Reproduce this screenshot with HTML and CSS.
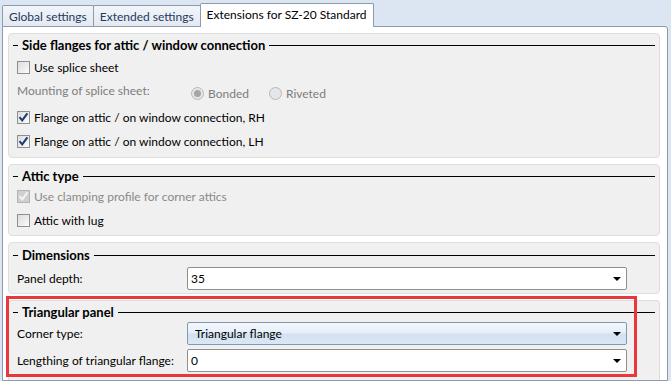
FILE: index.html
```html
<!DOCTYPE html>
<html lang="en">
<head>
    <meta charset="UTF-8">
    <title>Extensions for SZ-20 Standard</title>
    <link rel="stylesheet" href="styles.css">
</head>
<body>
    <div class="tabs">
        <div class="tab">Global settings</div>
        <div class="tab">Extended settings</div>
        <div class="tab active">Extensions for SZ-20 Standard</div>
    </div>

    <div class="panel">
        <section class="group group-flanges">
            <div class="group-title"><span>Side flanges for attic / window connection</span></div>
            <div class="row">
                <span class="check"></span>
                <span>Use splice sheet</span>
            </div>
            <div class="row row-mounting">
                <span class="mount-label">Mounting of splice sheet:</span>
                <span class="radio checked"></span>
                <span class="radio-text">Bonded</span>
                <span class="radio"></span>
                <span class="radio-text">Riveted</span>
            </div>
            <div class="row">
                <span class="check">
                    <svg viewBox="0 0 13 13" width="13" height="13"><path d="M2.5 6.2 L5.2 9.4 L10.4 2.3" fill="none" stroke="#1d3a7a" stroke-width="2"/></svg>
                </span>
                <span>Flange on attic / on window connection, RH</span>
            </div>
            <div class="row">
                <span class="check">
                    <svg viewBox="0 0 13 13" width="13" height="13"><path d="M2.5 6.2 L5.2 9.4 L10.4 2.3" fill="none" stroke="#1d3a7a" stroke-width="2"/></svg>
                </span>
                <span>Flange on attic / on window connection, LH</span>
            </div>
        </section>

        <section class="group group-attic">
            <div class="group-title"><span>Attic type</span></div>
            <div class="row disabled">
                <span class="check">
                    <svg viewBox="0 0 13 13" width="13" height="13"><path d="M2.5 6.2 L5.2 9.4 L10.4 2.3" fill="none" stroke="#f4f4f4" stroke-width="2"/></svg>
                </span>
                <span>Use clamping profile for corner attics</span>
            </div>
            <div class="row">
                <span class="check"></span>
                <span>Attic with lug</span>
            </div>
        </section>

        <section class="group group-dims">
            <div class="group-title"><span>Dimensions</span></div>
            <div class="form-grid">
                <label>Panel depth:</label>
                <div class="combo"><span class="value">35</span><span class="arrow"></span></div>
            </div>
        </section>

        <section class="group group-last">
            <div class="group-title"><span>Triangular panel</span></div>
            <div class="form-grid">
                <label>Corner type:</label>
                <div class="combo combo-hover"><span class="value">Triangular flange</span><span class="arrow"></span></div>
                <label>Lengthing of triangular flange:</label>
                <div class="combo"><span class="value">0</span><span class="arrow"></span></div>
            </div>
        </section>

        <div class="highlight"></div>
    </div>
</body>
</html>
```

FILE: styles.css
```css
* {
    margin: 0;
    padding: 0;
    box-sizing: border-box;
}

body {
    font-family: "Segoe UI", Lato, "Liberation Sans", sans-serif;
    font-size: 12px;
    color: #000;
    background-color: #dce6f2;
    height: 100vh;
    overflow: hidden;
    display: flex;
    flex-direction: column;
}

/* Tab strip */
.tabs {
    height: 26px;
    padding: 3px 0 0 2px;
    display: flex;
    align-items: flex-end;
}

.tab {
    height: 21px;
    padding: 0 6px;
    display: flex;
    align-items: center;
    color: #1e3a5f;
    background: linear-gradient(#f2f5fa, #e4e9f1);
    border: 1px solid #8e9bab;
    border-bottom: none;
    border-radius: 2px 2px 0 0;
}

.tab + .tab {
    margin-left: -1px;
}

.tab.active {
    height: 24px;
    margin-bottom: -1px;
    padding: 0 6px 3px 6px;
    color: #000;
    background: #fff;
    position: relative;
    z-index: 1;
}

/* Content panel */
.panel {
    flex: 1;
    position: relative;
    margin: 0 3px 0 2px;
    padding: 6px 7px 0 5px;
    background: #fff;
    border: 1px solid #8e9bab;
    border-radius: 0 3px 0 0;
    display: flex;
    flex-direction: column;
    gap: 6px;
}

.group {
    background: #f0f0f0;
    border: 1px solid #dedede;
    border-radius: 4px;
    padding: 3px 4px 3px 8px;
}

.group-last {
    flex: 1;
    border-bottom: none;
    border-radius: 4px 4px 0 0;
}

.group-title {
    height: 16px;
    margin-left: -4px;
    display: flex;
    align-items: center;
    font-weight: bold;
    font-size: 13px;
}

.group-title::before {
    content: "";
    width: 5px;
    height: 1px;
    margin-right: 4px;
    background: #000;
}

.group-title::after {
    content: "";
    flex: 1;
    height: 1px;
    margin-left: 4px;
    background: #000;
}

.group-flanges .group-title {
    margin-bottom: 2px;
}

.group-flanges {
    padding-bottom: 4px;
}

.group-attic {
    padding-bottom: 3px;
}

.group-dims {
    padding-top: 4px;
}

.row {
    height: 24px;
    display: flex;
    align-items: center;
    gap: 4px;
}

.row-mounting {
    height: 26px;
    gap: 0;
}

.row.disabled {
    color: #8a8a8a;
}

/* Check boxes */
.check {
    width: 13px;
    height: 13px;
    border: 1px solid #8e8f8f;
    background: linear-gradient(135deg, #dcdcdc, #fbfbfb);
    display: flex;
    align-items: center;
    justify-content: center;
    flex-shrink: 0;
}

.check svg {
    display: block;
    margin: -1px;
}

.row.disabled .check {
    border-color: #b4b4b4;
    background: #cfcfcf;
}

/* Radio buttons (disabled) */
.mount-label {
    width: 174px;
    color: #7d7d7d;
    margin-top: -3px;
}

.radio {
    width: 13px;
    height: 13px;
    border-radius: 50%;
    border: 1px solid #b8b8b8;
    background: #e6e6e6;
    margin-top: 3px;
    position: relative;
}

.radio.checked::after {
    content: "";
    position: absolute;
    left: 2px;
    top: 2px;
    width: 7px;
    height: 7px;
    border-radius: 50%;
    background: #a5a5a5;
}

.radio-text {
    color: #7d7d7d;
    margin: 3px 20px 0 4px;
}

/* Combo boxes */
.form-grid {
    display: grid;
    grid-template-columns: 170px 1fr;
    align-items: center;
    row-gap: 4px;
    margin: 4px 28px 0 0;
}

.group-last .form-grid {
    margin-top: 2px;
}

.combo {
    height: 23px;
    border: 1px solid #8f8f8f;
    border-radius: 2px;
    background: #fff;
    display: flex;
    align-items: center;
    padding: 0 5px 0 3px;
}

.combo .value {
    flex: 1;
}

.combo-hover {
    border-color: #8498b4;
    background: linear-gradient(#f4f8fd 0%, #e6eef8 45%, #d2e1f2 55%, #dae7f5 100%);
}

.combo-hover .value {
    padding-left: 4px;
}

.arrow {
    width: 0;
    height: 0;
    border-left: 4px solid transparent;
    border-right: 4px solid transparent;
    border-top: 4px solid #000;
}

/* Red annotation frame */
.highlight {
    position: absolute;
    left: 3px;
    top: 269px;
    width: 631px;
    height: 81px;
    border: 3px solid #e8383d;
    pointer-events: none;
}
```
